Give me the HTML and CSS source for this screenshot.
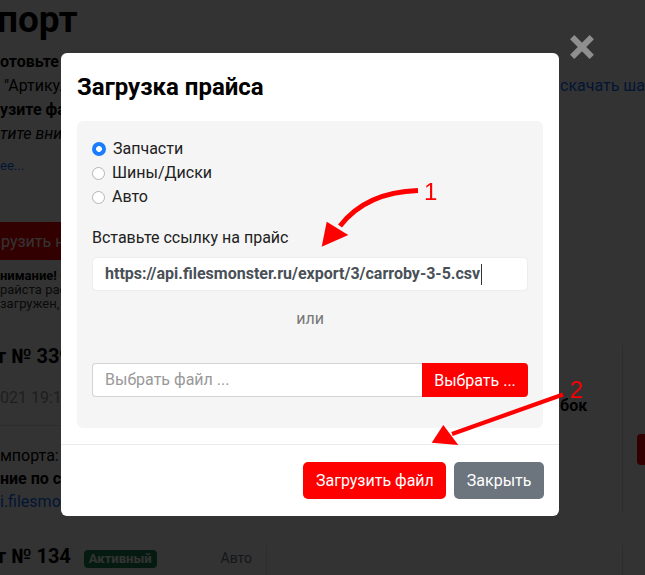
FILE: index.html
```html
<!DOCTYPE html>
<html lang="ru">
<head>
    <meta charset="UTF-8">
    <meta name="viewport" content="width=device-width, initial-scale=1.0">
    <title>Импорт прайса</title>
    <link rel="stylesheet" href="styles.css">
</head>
<body>
    <!-- page under the dialog -->
    <div class="page">
        <h1 class="page-title">порт</h1>

        <div class="intro">
            <p><b>отовьте файл прайса в формате CSV или XLSX</b></p>
            <div class="intro-row">
                <span class="intro-cols">"Артикул", "Наименование", "Цена", "Наличие"</span>
                <a class="link tpl-link" href="#">скачать шаблон</a>
            </div>
            <p><b>узите файл или укажите ссылку на него</b></p>
            <p><i>тите внимание: обработка занимает до 10 минут</i></p>
            <a class="link more" href="#">ее...</a>
        </div>

        <button class="btn-upload">рузить новый прайс</button>

        <div class="notice">
            <div><b>нимание!</b> Обработка может занять время</div>
            <div>райста расчитывается автоматически</div>
            <div>загружен, прайс будет обновлён</div>
        </div>

        <section class="order">
            <div class="order-main">
                <h2 class="order-title">т № 339</h2>
                <div class="order-date">021 19:11</div>
                <hr class="order-sep">
                <div class="order-info">
                    <div>мпорта: по ссылке</div>
                    <div><b>ние по ссылке</b></div>
                    <a class="link" href="#">i.filesmonster.ru/export/3/carroby-3-5.csv</a>
                </div>
            </div>
            <div class="order-stat"><b>бок</b></div>
            <div class="order-actions"><span class="btn-mini"></span></div>
        </section>

        <section class="order order-short">
            <div class="order-head">
                <h2 class="order-title">т № 134</h2>
                <span class="badge">Активный</span>
                <span class="order-type">Авто</span>
            </div>
            <div class="order-cell"></div>
            <div class="order-actions"></div>
        </section>
    </div>

    <!-- dialog -->
    <div class="overlay">
        <svg class="modal-close" viewBox="0 0 24 24" width="24" height="24">
            <path d="M2.2 2.2 L21.8 21.8 M21.8 2.2 L2.2 21.8" stroke="#8f8f8f" stroke-width="6"/>
        </svg>

        <div class="modal">
            <div class="modal-header">
                <h3 class="modal-title">Загрузка прайса</h3>
            </div>
            <div class="modal-body">
                <div class="panel">
                    <div class="radio"><span class="radio-mark is-checked"></span>Запчасти</div>
                    <div class="radio"><span class="radio-mark"></span>Шины/Диски</div>
                    <div class="radio"><span class="radio-mark"></span>Авто</div>

                    <div class="field-label">Вставьте ссылку на прайс</div>
                    <div class="url-input">https://api.filesmonster.ru/export/3/carroby-3-5.csv<span class="caret"></span></div>

                    <div class="or">или</div>

                    <div class="file-group">
                        <div class="file-name">Выбрать файл ...</div>
                        <button class="file-btn">Выбрать ...</button>
                    </div>
                </div>
            </div>
            <div class="modal-footer">
                <button class="btn btn-red">Загрузить файл</button>
                <button class="btn btn-gray">Закрыть</button>
            </div>
        </div>
    </div>

    <!-- hand drawn hints -->
    <svg class="marks" viewBox="0 0 645 575" width="645" height="575">
        <path d="M418 190.5 C388 191.5 360 200 340 226" fill="none" stroke="#f00" stroke-width="5"/>
        <path d="M321.7 246.7 L326.7 221.7 L348.3 235 Z" fill="#f00"/>
        <text class="mark-num" x="424" y="199.5">1</text>
        <path d="M563 394.5 L452 434" fill="none" stroke="#f00" stroke-width="4"/>
        <path d="M431.7 442.7 L443.3 425 L458.3 445 Z" fill="#f00"/>
        <text class="mark-num" x="570" y="398">2</text>
    </svg>
</body>
</html>
```

FILE: styles.css
```css
/* General styling */
* {
    box-sizing: border-box;
}
html, body {
    margin: 0;
}
body {
    width: 645px;
    height: 575px;
    overflow: hidden;
    font-family: Roboto, "Noto Sans", sans-serif;
    font-size: 16px;
    line-height: 24px;
    color: #000;
    background-color: #fff;
}
button {
    font-family: inherit;
    font-size: 16px;
    border: none;
    cursor: pointer;
}
.link {
    color: #0d6efd;
    text-decoration: none;
}

/* Page behind the dialog */
.page {
    width: 645px;
    white-space: nowrap;
}
.page-title {
    margin: 0 0 0 -3px;
    font-size: 37px;
    line-height: 40px;
    font-weight: 700;
}
.intro {
    margin-top: 10px;
}
.intro p {
    margin: 0;
}
.intro-row {
    display: grid;
    grid-template-columns: 560px 85px;
    overflow: hidden;
}
.intro-cols {
    padding-left: 4px;
    overflow: hidden;
}
.more {
    display: block;
    margin-top: 10px;
    font-size: 13px;
    line-height: 20px;
}
.btn-upload {
    display: block;
    margin-top: 46px;
    width: 220px;
    height: 38px;
    padding: 0 0 0 1px;
    text-align: left;
    color: #fff;
    background-color: #f00;
    border-radius: 0 4px 4px 0;
}
.notice {
    margin-top: 8.5px;
    font-size: 13px;
    line-height: 14px;
    color: #333;
}
.notice b {
    color: #000;
}
.order {
    display: grid;
    grid-template-columns: 560px 62px 1fr;
    margin-top: 34.5px;
}
.order-title {
    margin: 0 0 0 -4px;
    font-size: 20px;
    line-height: 22px;
    font-weight: 700;
}
.order-date {
    margin-top: 18.5px;
    color: #999;
}
.order-sep {
    width: 540px;
    margin: 15.5px 0 0;
    border: none;
    border-top: 1px solid #dee2e6;
}
.order-info {
    margin-top: 18px;
    line-height: 23px;
}
.order-stat {
    padding-top: 48.5px;
}
.order-actions {
    border-left: 1px solid #dee2e6;
    padding: 89px 0 0 14px;
}
.btn-mini {
    display: block;
    width: 60px;
    height: 31px;
    background-color: #f00;
    border-radius: 4px;
}
.order-short {
    grid-template-columns: 267px 355px 1fr;
    margin-top: 32px;
    height: 30px;
}
.order-head {
    display: flex;
    align-items: baseline;
    padding-right: 14px;
    border-right: 1px solid #dee2e6;
}
.badge {
    margin-left: 13px;
    padding: 0 5px;
    font-size: 13px;
    line-height: 18px;
    font-weight: 700;
    color: #fff;
    background-color: #198754;
    border-radius: 4px;
}
.order-type {
    margin-left: auto;
    font-size: 14px;
    color: #6c757d;
}
.order-short .order-actions {
    padding: 0;
}

/* Dialog */
.overlay {
    position: fixed;
    inset: 0;
    padding: 53px 0 0 61px;
    background-color: rgba(0, 0, 0, 0.8);
}
.modal-close {
    position: absolute;
    left: 570px;
    top: 35px;
}
.modal {
    width: 498px;
    background-color: #fff;
    border-radius: 6px;
    color: #212121;
}
.modal-header {
    padding: 16px 16px 0;
}
.modal-title {
    margin: 0;
    font-size: 24px;
    line-height: 36px;
    font-weight: 700;
    color: #000;
}
.modal-body {
    padding: 16px 16px 16px;
}
.panel {
    padding: 16px 15px 31px;
    background-color: #f5f5f5;
    border-radius: 6px;
}
.radio {
    display: flex;
    align-items: center;
    gap: 7px;
    line-height: 24px;
}
.radio-mark {
    width: 13px;
    height: 13px;
    border: 1px solid #b5b5b5;
    border-radius: 50%;
    background-color: #fff;
}
.radio-mark.is-checked {
    width: 14px;
    height: 14px;
    border: none;
    background: radial-gradient(circle, #fff 0 2.6px, #1a7dfb 3.2px);
}
.field-label {
    margin-top: 16.5px;
}
.url-input {
    display: flex;
    align-items: center;
    height: 34px;
    margin-top: 7.5px;
    padding: 0 12px;
    font-weight: 700;
    color: #495057;
    background-color: #fff;
    border: 1px solid #ededed;
    border-radius: 5px;
}
.caret {
    width: 1px;
    height: 21px;
    margin-left: 1px;
    background-color: #333;
}
.or {
    margin-top: 15.5px;
    text-align: center;
    color: #777;
}
.file-group {
    display: flex;
    height: 34px;
    margin-top: 32.5px;
}
.file-name {
    flex: 1;
    display: flex;
    align-items: center;
    padding: 0 12px;
    color: #999;
    background-color: #fff;
    border: 1px solid #d4d4d4;
    border-right: none;
    border-radius: 4px 0 0 4px;
}
.file-btn {
    width: 106px;
    color: #fff;
    background-color: #f00;
    border-radius: 0 4px 4px 0;
}
.modal-footer {
    display: flex;
    justify-content: flex-end;
    gap: 8px;
    padding: 17px 15px;
    border-top: 1px solid #e9ecef;
}
.btn {
    height: 37px;
    padding: 0 12.5px;
    color: #fff;
    border-radius: 5px;
}
.btn-red {
    background-color: #f00;
}
.btn-gray {
    background-color: #6c757d;
}

/* Red hints on top */
.marks {
    position: fixed;
    left: 0;
    top: 0;
    pointer-events: none;
}
.mark-num {
    font-family: "Liberation Sans", Arial, sans-serif;
    font-size: 24px;
    fill: #f00;
}
```
